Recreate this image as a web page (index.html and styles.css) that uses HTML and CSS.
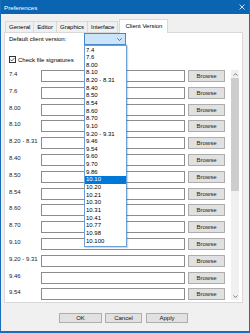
FILE: index.html
```html
<!DOCTYPE html>
<html lang="en">
<head>
    <meta charset="UTF-8">
    <meta name="viewport" content="width=device-width, initial-scale=1.0">
    <title>Preferences</title>
    <link rel="stylesheet" href="styles.css">
</head>
<body>
    <div class="window">
        <div class="titlebar">
            <span class="title">Preferences</span>
            <svg class="close" width="6" height="6" viewBox="0 0 6 6"><path d="M0.5 0.5L5.5 5.5M5.5 0.5L0.5 5.5" stroke="#fff" stroke-width="0.8" fill="none"/></svg>
        </div>

        <div class="tabs">
            <div class="tab">General</div>
            <div class="tab">Editor</div>
            <div class="tab">Graphics</div>
            <div class="tab">Interface</div>
            <div class="tab active">Client Version</div>
        </div>

        <div class="panel">
            <div class="default-row">
                <span class="default-label">Default client version:</span>
                <div class="combo">
                    <svg class="chevron" width="5" height="3" viewBox="0 0 5 3"><path d="M0.3 0.3L2.5 2.5L4.7 0.3" stroke="#444" stroke-width="0.7" fill="none"/></svg>
                    <ul class="dropdown">
                        <li>7.4</li>
                        <li>7.6</li>
                        <li>8.00</li>
                        <li>8.10</li>
                        <li>8.20 - 8.31</li>
                        <li>8.40</li>
                        <li>8.50</li>
                        <li>8.54</li>
                        <li>8.60</li>
                        <li>8.70</li>
                        <li>9.10</li>
                        <li>9.20 - 9.31</li>
                        <li>9.46</li>
                        <li>9.54</li>
                        <li>9.60</li>
                        <li>9.70</li>
                        <li>9.86</li>
                        <li class="selected">10.10</li>
                        <li>10.20</li>
                        <li>10.21</li>
                        <li>10.30</li>
                        <li>10.31</li>
                        <li>10.41</li>
                        <li>10.77</li>
                        <li>10.98</li>
                        <li>10.100</li>
                    </ul>
                </div>
            </div>

            <div class="check-row">
                <span class="checkbox">
                    <svg width="5" height="5" viewBox="0 0 5 5"><path d="M0.4 2.6L1.8 4L4.6 0.9" stroke="#222" stroke-width="0.7" fill="none"/></svg>
                </span>
                Check file signatures
            </div>

            <div class="scroller">
                <div class="rows">
                    <div class="row"><span class="row-label">7.4</span><span class="path-input"></span><span class="browse">Browse</span></div>
                    <div class="row"><span class="row-label">7.6</span><span class="path-input"></span><span class="browse">Browse</span></div>
                    <div class="row"><span class="row-label">8.00</span><span class="path-input"></span><span class="browse">Browse</span></div>
                    <div class="row"><span class="row-label">8.10</span><span class="path-input"></span><span class="browse">Browse</span></div>
                    <div class="row"><span class="row-label">8.20 - 8.31</span><span class="path-input"></span><span class="browse">Browse</span></div>
                    <div class="row"><span class="row-label">8.40</span><span class="path-input"></span><span class="browse">Browse</span></div>
                    <div class="row"><span class="row-label">8.50</span><span class="path-input"></span><span class="browse">Browse</span></div>
                    <div class="row"><span class="row-label">8.54</span><span class="path-input"></span><span class="browse">Browse</span></div>
                    <div class="row"><span class="row-label">8.60</span><span class="path-input"></span><span class="browse">Browse</span></div>
                    <div class="row"><span class="row-label">8.70</span><span class="path-input"></span><span class="browse">Browse</span></div>
                    <div class="row"><span class="row-label">9.10</span><span class="path-input"></span><span class="browse">Browse</span></div>
                    <div class="row"><span class="row-label">9.20 - 9.31</span><span class="path-input"></span><span class="browse">Browse</span></div>
                    <div class="row"><span class="row-label">9.46</span><span class="path-input"></span><span class="browse">Browse</span></div>
                    <div class="row"><span class="row-label">9.54</span><span class="path-input"></span><span class="browse">Browse</span></div>
                </div>
                <div class="scrollbar">
                    <div class="sb-arrow">
                        <svg width="5" height="3" viewBox="0 0 5 3"><path d="M0.5 2.5L2.5 0.6L4.5 2.5" stroke="#606060" stroke-width="0.8" fill="none"/></svg>
                    </div>
                    <div class="sb-thumb"></div>
                    <div class="sb-track"></div>
                    <div class="sb-arrow">
                        <svg width="5" height="3" viewBox="0 0 5 3"><path d="M0.5 0.5L2.5 2.4L4.5 0.5" stroke="#606060" stroke-width="0.8" fill="none"/></svg>
                    </div>
                </div>
            </div>
        </div>

        <div class="buttons">
            <button class="btn btn-ok">OK</button>
            <button class="btn btn-cancel">Cancel</button>
            <button class="btn btn-apply">Apply</button>
        </div>
    </div>
</body>
</html>
```

FILE: styles.css
```css
* {
    box-sizing: border-box;
}
body {
    margin: 0;
    font-family: 'Liberation Sans', Arial, sans-serif;
    font-size: 6px;
    color: #000;
    background-color: #f0f0f0;
}
.window {
    width: 250px;
    height: 333px;
    background-color: #f0f0f0;
    border: 1px solid #1c6cbc;
    border-top: none;
    border-bottom-width: 2px;
}
.titlebar {
    height: 14px;
    background-color: #0a64b2;
    color: #fff;
    display: flex;
    align-items: center;
    justify-content: space-between;
    padding: 0 3px 0 3px;
    font-size: 6.2px;
}
.close {
    display: block;
    margin-right: 1px;
}

/* tabs */
.tabs {
    height: 18px;
    display: flex;
    align-items: flex-end;
    padding: 5px 0 0 4px;
    position: relative;
    z-index: 1;
}
.tab {
    height: 11px;
    line-height: 11px;
    padding: 0 3px;
    border: 1px solid #d9d9d9;
    border-bottom: none;
    margin-left: -1px;
    background-color: #f0f0f0;
    white-space: nowrap;
}
.tab:first-child {
    margin-left: 0;
}
.tab.active {
    height: 14px;
    line-height: 13px;
    margin: 0 0 -1px 1px;
    padding: 0 5px;
    background-color: #fff;
}

/* panel */
.panel {
    margin-left: 3px;
    width: 239px;
    height: 271px;
    background-color: #fff;
    border: 1px solid #d9d9d9;
    border-top-color: #d9d9d9;
    padding: 0 3px 0 4px;
}
.default-row {
    display: flex;
    align-items: center;
    height: 12px;
}
.default-label {
    width: 75px;
}
.combo {
    position: relative;
    width: 42px;
    height: 12px;
    background-color: #cce4f7;
    border: 1px solid #3f8ad3;
    display: flex;
    align-items: center;
    justify-content: flex-end;
    padding-right: 3px;
}
.chevron {
    display: block;
}
.dropdown {
    position: absolute;
    top: 11px;
    left: -1px;
    width: 43px;
    margin: 0;
    padding: 0.5px 0;
    list-style: none;
    background-color: #fff;
    border: 1px solid #6c9fd6;
    box-shadow: 1px 1px 1px rgba(0, 0, 0, 0.15);
    z-index: 5;
}
.dropdown li {
    height: 7.65px;
    line-height: 7.65px;
    padding-left: 1px;
    white-space: nowrap;
}
.dropdown li.selected {
    background-color: #0078d7;
    color: #fff;
}

.check-row {
    display: flex;
    align-items: center;
    height: 7px;
    margin-top: 11px;
}
.checkbox {
    width: 7px;
    height: 7px;
    border: 1px solid #333;
    display: flex;
    align-items: center;
    justify-content: center;
    margin-right: 2px;
    background-color: #fff;
}
.checkbox svg {
    display: block;
}

/* version rows */
.scroller {
    display: flex;
    height: 230px;
    margin-top: 7px;
}
.rows {
    flex: 1;
    overflow: hidden;
}
.row {
    display: flex;
    align-items: flex-start;
    height: 16.8px;
}
.row-label {
    width: 32px;
    line-height: 8px;
    white-space: nowrap;
    color: #1a1a1a;
}
.path-input {
    width: 144px;
    height: 12px;
    border: 1px solid #8c8c8c;
    background-color: #fff;
}
.browse {
    width: 37px;
    height: 12px;
    margin-left: 3px;
    border: 1px solid #adadad;
    background-color: #e1e1e1;
    display: flex;
    align-items: center;
    justify-content: center;
    color: #222;
}
.scrollbar {
    width: 8px;
    display: flex;
    flex-direction: column;
    background-color: #f0f0f0;
}
.sb-arrow {
    height: 8px;
    display: flex;
    align-items: center;
    justify-content: center;
}
.sb-arrow svg {
    display: block;
}
.sb-thumb {
    height: 113px;
    background-color: #cdcdcd;
}
.sb-track {
    flex: 1;
}

/* bottom buttons */
.buttons {
    display: flex;
    padding-left: 58px;
    margin-top: 10px;
}
.btn {
    height: 10px;
    padding: 0;
    font-family: inherit;
    font-size: 6px;
    color: #111;
    background-color: #e1e1e1;
    border: 1px solid #adadad;
    border-radius: 0;
}
.btn-ok {
    width: 43px;
}
.btn-cancel {
    width: 37px;
    margin-left: 3px;
}
.btn-apply {
    width: 42px;
    margin-left: 4px;
}
```
